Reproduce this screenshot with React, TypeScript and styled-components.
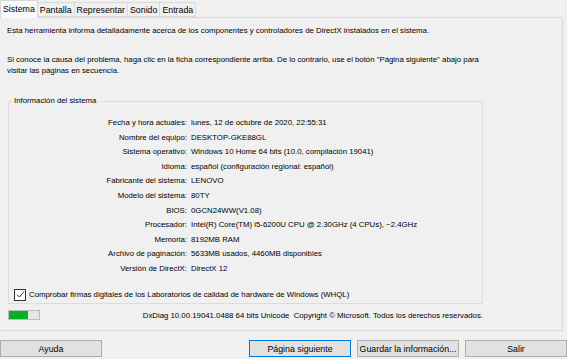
import React from "react";
import styled, { createGlobalStyle } from "styled-components";

const GlobalStyle = createGlobalStyle`
  html, body {
    margin: 0;
    padding: 0;
    background: #f0f0f0;
  }
`;

const tabs = ["Sistema", "Pantalla", "Representar", "Sonido", "Entrada"];

const info: [string, string][] = [
  ["Fecha y hora actuales:", "lunes, 12 de octubre de 2020, 22:55:31"],
  ["Nombre del equipo:", "DESKTOP-GKE88GL"],
  ["Sistema operativo:", "Windows 10 Home 64 bits (10.0, compilación 19041)"],
  ["Idioma:", "español (configuración regional: español)"],
  ["Fabricante del sistema:", "LENOVO"],
  ["Modelo del sistema:", "80TY"],
  ["BIOS:", "0GCN24WW(V1.08)"],
  ["Procesador:", "Intel(R) Core(TM) i5-6200U CPU @ 2.30GHz (4 CPUs), ~2.4GHz"],
  ["Memoria:", "8192MB RAM"],
  ["Archivo de paginación:", "5633MB usados, 4460MB disponibles"],
  ["Versión de DirectX:", "DirectX 12"],
];

export default function App() {
  return (
    <Window>
      <GlobalStyle />
      <TabBar>
        {tabs.map((t, i) => (
          <Tab key={t} $active={i === 0}>
            {t}
          </Tab>
        ))}
      </TabBar>
      <Panel>
        <Intro>
          Esta herramienta informa detalladamente acerca de los componentes y controladores de DirectX
          instalados en el sistema.
        </Intro>
        <Intro $gap>
          Si conoce la causa del problema, haga clic en la ficha correspondiente arriba. De lo contrario,
          use el botón "Página siguiente" abajo para
          <br />
          visitar las páginas en secuencia.
        </Intro>
        <GroupBox>
          <Legend>Información del sistema</Legend>
          <InfoGrid>
            {info.map(([k, v]) => (
              <React.Fragment key={k}>
                <Label>{k}</Label>
                <Value>{v}</Value>
              </React.Fragment>
            ))}
          </InfoGrid>
          <CheckRow>
            <CheckBox>
              <svg width="9" height="9" viewBox="0 0 9 9">
                <path d="M1 4.6 L3.4 7 L8 1.6" fill="none" stroke="#333" strokeWidth="1" />
              </svg>
            </CheckBox>
            Comprobar firmas digitales de los Laboratorios de calidad de hardware de Windows (WHQL)
          </CheckRow>
        </GroupBox>
        <StatusRow>
          <Progress>
            <ProgressFill style={{ width: "62%" }} />
          </Progress>
          <Copyright>
            DxDiag 10.00.19041.0488 64 bits Unicode&nbsp;&nbsp;Copyright © Microsoft. Todos los derechos
            reservados.
          </Copyright>
        </StatusRow>
      </Panel>
      <ButtonRow>
        <Button>Ayuda</Button>
        <Spacer />
        <Button $focused>Página siguiente</Button>
        <Button>Guardar la información...</Button>
        <Button>Salir</Button>
      </ButtonRow>
    </Window>
  );
}

const Window = styled.div`
  width: 567px;
  height: 359px;
  display: flex;
  flex-direction: column;
  background: #f0f0f0;
  font-family: "Liberation Sans", Arial, sans-serif;
  color: #000;
  overflow: hidden;
`;

const TabBar = styled.div`
  display: flex;
  align-items: flex-end;
  height: 17px;
  padding-left: 1px;
  position: relative;
  z-index: 1;
`;

const Tab = styled.div<{ $active?: boolean }>`
  font-size: 8.8px;
  line-height: ${(p) => (p.$active ? "17px" : "15px")};
  height: ${(p) => (p.$active ? "18px" : "15px")};
  margin-bottom: ${(p) => (p.$active ? "-1px" : "0")};
  padding: 0 2px;
  margin-left: ${(p) => (p.$active ? "-1px" : "0")};
  margin-right: -1px;
  box-sizing: border-box;
  border: 1px solid #d9d9d9;
  border-bottom: ${(p) => (p.$active ? "none" : "1px solid #d9d9d9")};
  background: ${(p) => (p.$active ? "#f9f9f9" : "#f0f0f0")};
  z-index: ${(p) => (p.$active ? 2 : 1)};
`;

const Panel = styled.div`
  height: 314px;
  margin-right: 4px;
  box-sizing: border-box;
  border: 1px solid #d9d9d9;
  border-left: none;
  border-top-right-radius: 3px;
  padding: 0 7px;
  display: flex;
  flex-direction: column;
`;

const Intro = styled.p<{ $gap?: boolean }>`
  margin: ${(p) => (p.$gap ? "18px" : "7px")} 0 0;
  font-size: 7.8px;
  line-height: 11px;
  white-space: nowrap;
`;

const GroupBox = styled.fieldset`
  margin: 20px 0 0 1px;
  width: 475px;
  height: 208px;
  box-sizing: border-box;
  padding: 0;
  border: 1px solid #dcdcdc;
  min-width: 0;
`;

const Legend = styled.legend`
  font-size: 7.8px;
  line-height: 10px;
  padding: 0 2px;
  margin-left: 3px;
`;

const InfoGrid = styled.div`
  display: grid;
  grid-template-columns: 178px 1fr;
  column-gap: 4px;
  margin-top: 10px;
  font-size: 7.8px;
  line-height: 14.6px;
  white-space: nowrap;
`;

const Label = styled.div`
  text-align: right;
`;

const Value = styled.div``;

const CheckRow = styled.div`
  display: flex;
  align-items: center;
  gap: 3px;
  margin: 12px 0 0 5px;
  font-size: 7.8px;
  line-height: 12px;
  white-space: nowrap;
`;

const CheckBox = styled.span`
  width: 12px;
  height: 12px;
  box-sizing: border-box;
  border: 1px solid #333;
  background: #fff;
  display: flex;
  align-items: center;
  justify-content: center;
`;

const StatusRow = styled.div`
  display: flex;
  align-items: center;
  width: 476px;
  margin-top: 6px;
  height: 10px;
`;

const Progress = styled.div`
  width: 32px;
  height: 10px;
  margin-left: 1px;
  box-sizing: border-box;
  border: 1px solid #bcbcbc;
  background: #e6e6e6;
`;

const ProgressFill = styled.div`
  height: 100%;
  background: #06b025;
`;

const Copyright = styled.div`
  margin-left: auto;
  font-size: 7.8px;
  white-space: nowrap;
`;

const ButtonRow = styled.div`
  display: flex;
  gap: 6px;
  margin-top: 9px;
  height: 17px;
`;

const Spacer = styled.div`
  flex: 1;
`;

const Button = styled.button<{ $focused?: boolean }>`
  width: 102px;
  height: 17px;
  padding: 0;
  box-sizing: border-box;
  font-family: "Liberation Sans", Arial, sans-serif;
  font-size: 8.8px;
  color: #000;
  background: #e1e1e1;
  border: 1px solid ${(p) => (p.$focused ? "#0078d7" : "#adadad")};
`;
